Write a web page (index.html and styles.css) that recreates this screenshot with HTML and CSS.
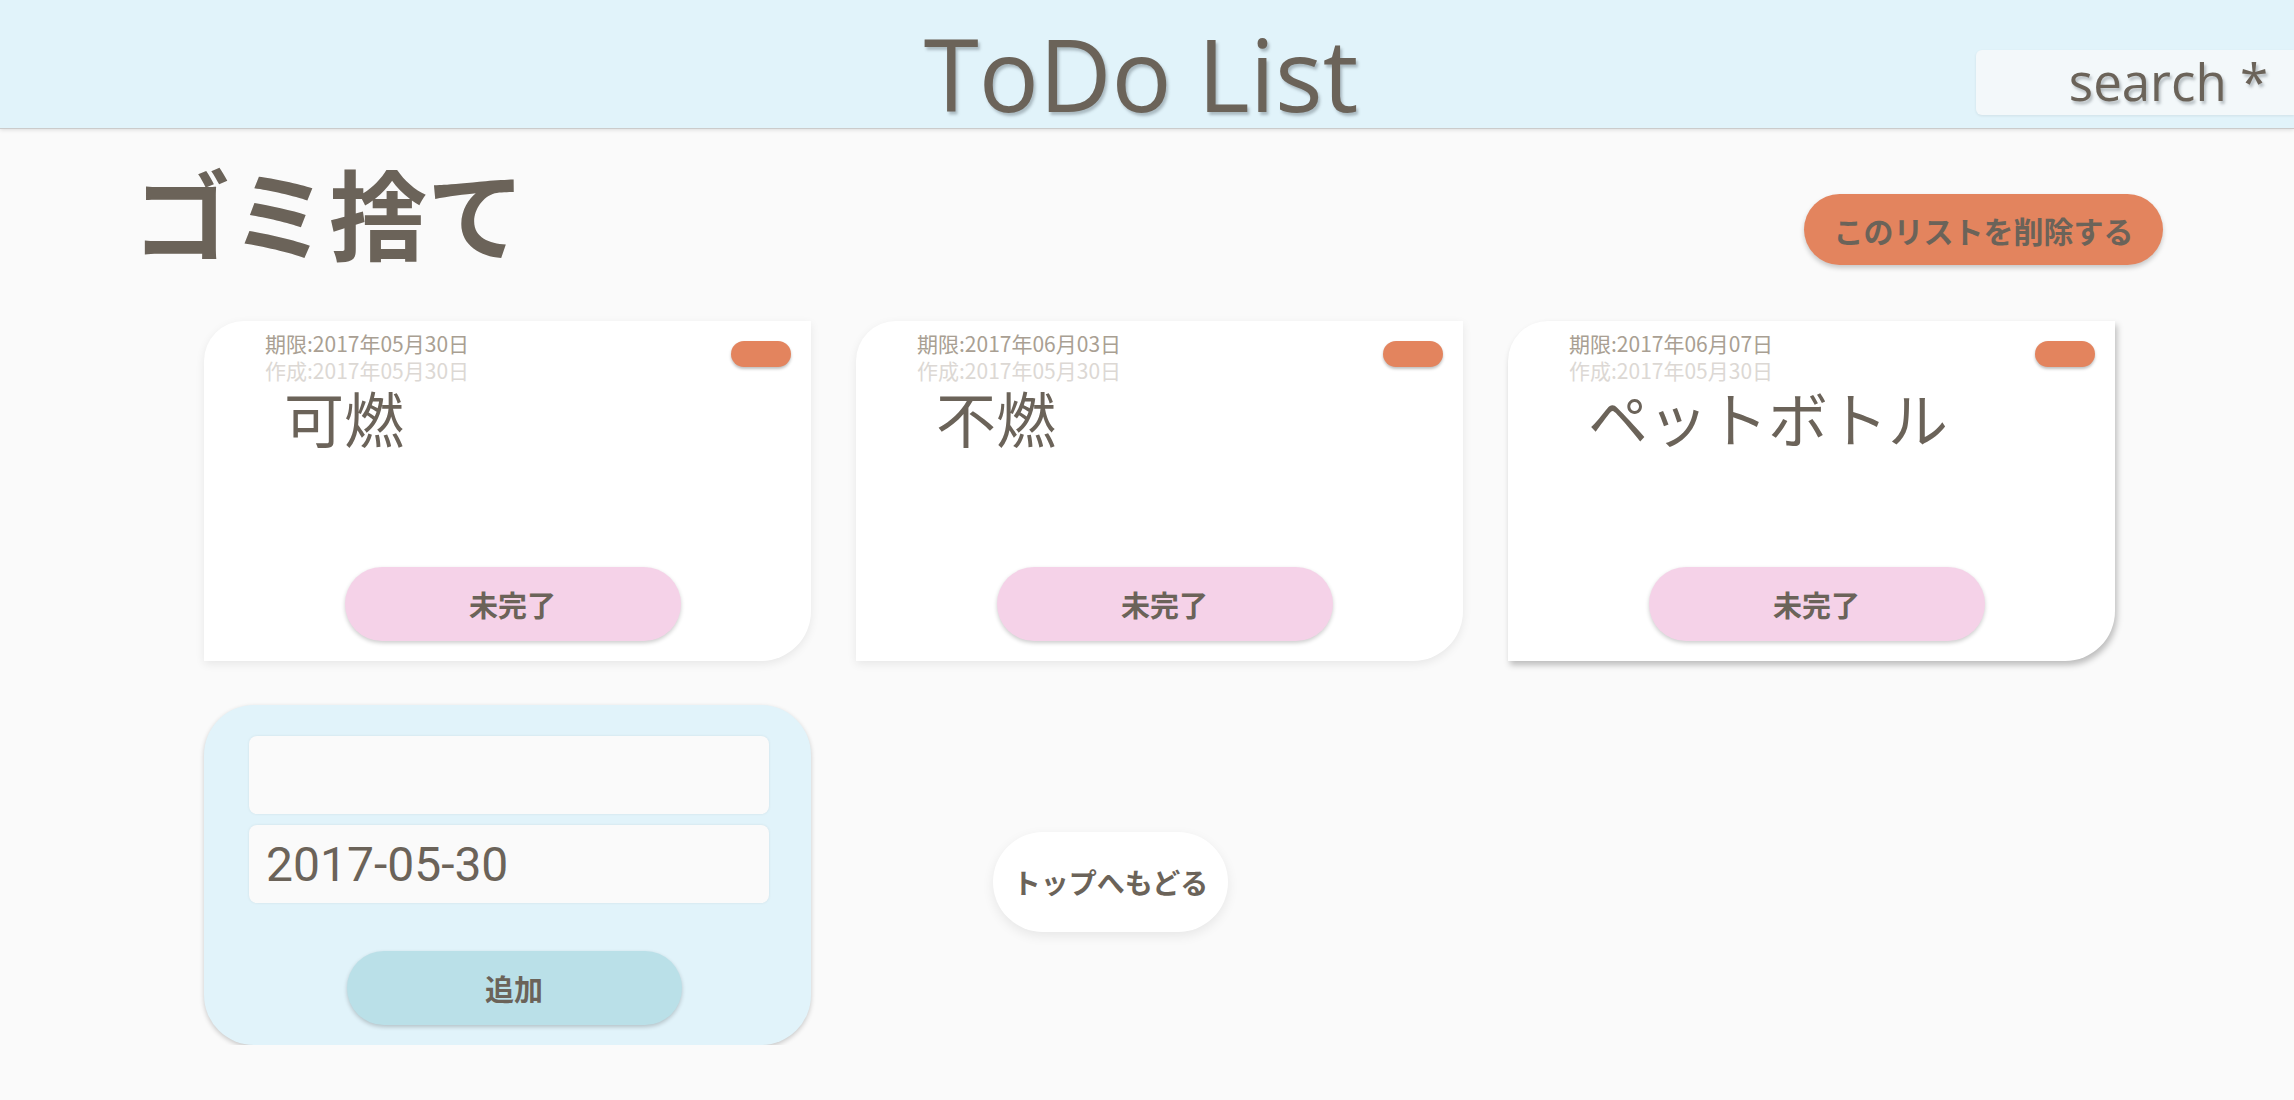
FILE: index.html
```html
<!DOCTYPE html>
<html lang="ja">
<head>
<meta charset="utf-8">
<title>ToDo List</title>
<link rel="stylesheet" href="styles.css">
</head>
<body>
<header class="app-header">
  <div class="header-side"></div>
  <h1 class="app-title">ToDo List</h1>
  <div class="header-side header-right">
    <div class="search-box">search *</div>
  </div>
</header>
<main class="page">
  <div class="list-head">
    <h2 class="list-title">ゴミ捨て</h2>
    <button class="btn-delete">このリストを削除する</button>
  </div>
  <div class="grid">
    <div class="card">
      <div class="meta">
        <div class="meta-due">期限:2017年05月30日</div>
        <div class="meta-created">作成:2017年05月30日</div>
      </div>
      <div class="card-title">可燃</div>
      <span class="pill"></span>
      <button class="btn-status">未完了</button>
    </div>
    <div class="card">
      <div class="meta">
        <div class="meta-due">期限:2017年06月03日</div>
        <div class="meta-created">作成:2017年05月30日</div>
      </div>
      <div class="card-title">不燃</div>
      <span class="pill"></span>
      <button class="btn-status">未完了</button>
    </div>
    <div class="card card-raised">
      <div class="meta">
        <div class="meta-due">期限:2017年06月07日</div>
        <div class="meta-created">作成:2017年05月30日</div>
      </div>
      <div class="card-title">ペットボトル</div>
      <span class="pill"></span>
      <button class="btn-status">未完了</button>
    </div>
    <form class="add-card">
      <input class="field" type="text" value="">
      <input class="field field-date" type="text" value="2017-05-30">
      <button type="button" class="btn-add">追加</button>
    </form>
    <div class="back-cell">
      <button class="btn-back">トップへもどる</button>
    </div>
  </div>
</main>
</body>
</html>
```

FILE: styles.css
```css
* { box-sizing: border-box; }

body {
  margin: 0;
  background: #fafafa;
  color: #6b6359;
  font-family: "Noto Sans CJK JP", "Noto Sans", sans-serif;
  overflow: hidden;
}

.app-header {
  height: 128px;
  background: #e1f3fa;
  display: grid;
  grid-template-columns: 1fr auto 1fr;
  box-shadow: 0 1px 0 #cbcbcb, 0 2px 4px rgba(0,0,0,0.12);
}

.app-title {
  margin: 0;
  padding-top: 23px;
  padding-right: 12px;
  font-family: "Open Sans", sans-serif;
  font-weight: 400;
  font-size: 100px;
  line-height: 1;
  color: #6b6359;
  text-shadow: 2px 3px 3px rgba(70,80,90,0.35);
}

.header-right {
  display: flex;
  justify-content: flex-end;
  align-items: flex-start;
}

.search-box {
  margin-top: 50px;
  width: 318px;
  height: 65px;
  background: #f3f8fa;
  border-radius: 6px 0 0 6px;
  box-shadow: 0 1px 3px rgba(0,0,0,0.08);
  font-family: "Open Sans", sans-serif;
  font-size: 51px;
  line-height: 63px;
  text-align: right;
  padding-right: 26px;
  color: #6b6359;
  text-shadow: 2px 3px 3px rgba(70,80,90,0.35);
}

.list-head {
  display: flex;
  justify-content: space-between;
  align-items: flex-start;
  padding: 33px 131px 0 133px;
}

.list-title {
  margin: 0;
  font-size: 98px;
  font-weight: 700;
  line-height: 1;
  color: #6b6359;
}

button {
  font-family: "Noto Sans CJK JP", "Noto Sans", sans-serif;
  color: #6b6359;
  border: none;
  cursor: pointer;
  font-weight: 700;
}

.btn-delete {
  margin-top: 33px;
  width: 359px;
  height: 71px;
  border-radius: 36px;
  background: #e3845e;
  font-size: 30px;
  box-shadow: 0 3px 5px rgba(0,0,0,0.2);
}

.grid {
  margin-top: 56px;
  padding-left: 204px;
  display: grid;
  grid-template-columns: repeat(3, 607px);
  column-gap: 45px;
  row-gap: 44px;
}

.card {
  position: relative;
  height: 340px;
  background: #fff;
  border-radius: 40px 0 50px 0;
  box-shadow: 0 3px 10px rgba(0,0,0,0.08);
  display: flex;
  flex-direction: column;
}

.card-raised {
  box-shadow: 2px 4px 6px rgba(0,0,0,0.25);
}

.meta {
  padding: 9px 0 0 61px;
  font-size: 21px;
  line-height: 27px;
}

.meta-due { color: #a99f93; }
.meta-created { color: #dcd8d4; }

.card-title {
  margin-top: 3px;
  padding-left: 80px;
  font-size: 60px;
  line-height: 1;
  color: #6b6359;
}

.pill {
  position: absolute;
  top: 20px;
  right: 20px;
  width: 60px;
  height: 26px;
  border-radius: 13px;
  background: #e3845e;
  box-shadow: 0 2px 3px rgba(0,0,0,0.25);
}

.btn-status {
  margin-top: auto;
  margin-bottom: 20px;
  margin-left: 10px;
  align-self: center;
  width: 336px;
  height: 74px;
  border-radius: 37px;
  background: #f5d2e8;
  font-size: 29px;
  box-shadow: 0 2px 4px rgba(0,0,0,0.2);
}

.add-card {
  margin: 0;
  height: 340px;
  background: #e1f3fa;
  border-radius: 50px;
  box-shadow: 0 2px 5px rgba(0,0,0,0.2);
  padding: 31px 42px 20px 45px;
  display: flex;
  flex-direction: column;
  gap: 11px;
}

.field {
  width: 100%;
  height: 78px;
  border: none;
  border-radius: 8px;
  background: #fafafa;
  box-shadow: 0 0 3px rgba(0,0,0,0.08);
  padding: 0 0 0 17px;
  font-family: Roboto, "Liberation Sans", sans-serif;
  font-size: 48px;
  color: #6b6359;
  outline: none;
}

.btn-add {
  margin-top: auto;
  margin-left: 10px;
  align-self: center;
  width: 335px;
  height: 74px;
  border-radius: 37px;
  background: #bae0e8;
  font-size: 29px;
  box-shadow: 0 2px 4px rgba(0,0,0,0.2);
}

.back-cell {
  display: flex;
  align-items: center;
  padding-left: 137px;
  padding-top: 14px;
}

.btn-back {
  width: 235px;
  height: 100px;
  border-radius: 50px;
  background: #fff;
  font-size: 28px;
  box-shadow: 0 4px 12px rgba(0,0,0,0.08);
}
```
